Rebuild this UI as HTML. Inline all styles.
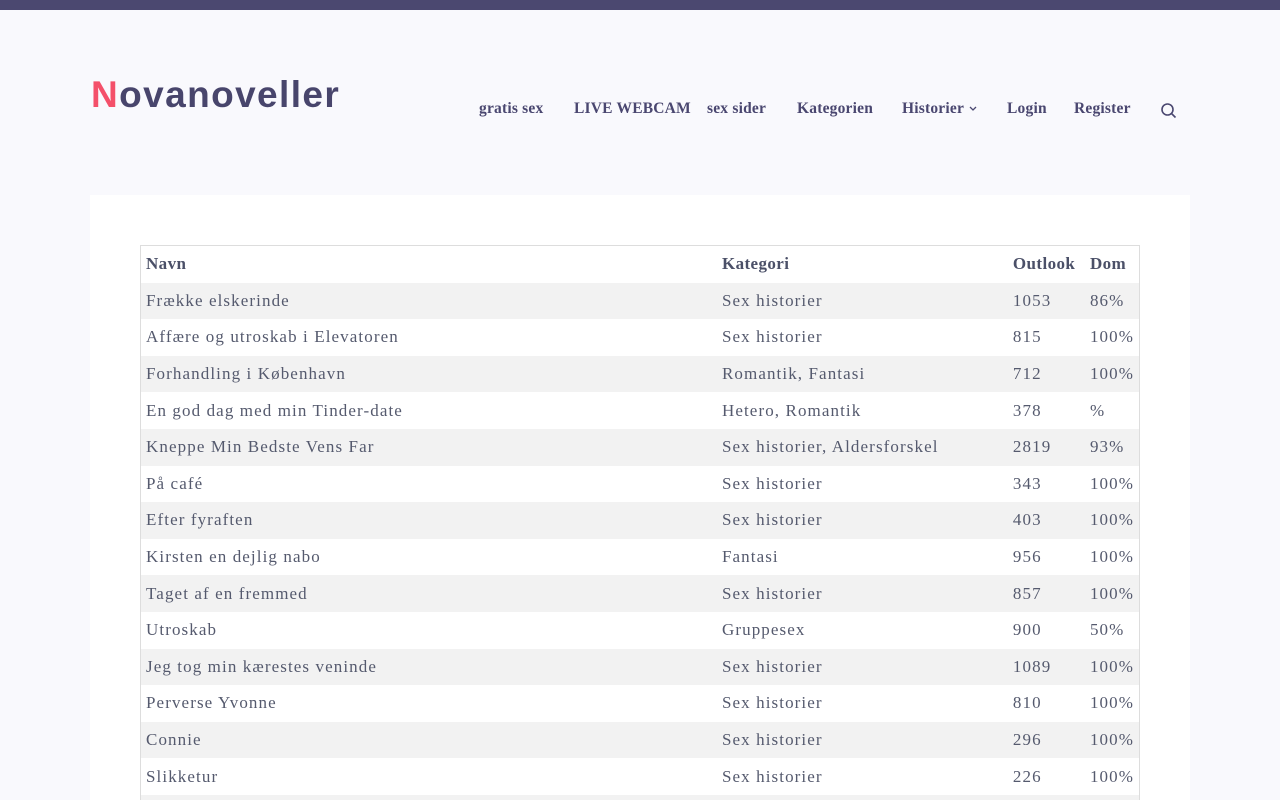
<!DOCTYPE html>
<html><head><meta charset="utf-8"><style>
html,body{margin:0;height:800px;overflow:hidden}
body{background:#f9f9fd;font-family:"Liberation Serif",serif;color:#555a6e;}
.top{height:10px;background:#4b4870;}
.logo{position:absolute;left:91px;top:74px;font:bold 37px "Liberation Sans",sans-serif;color:#48456c;letter-spacing:1.4px}
.logo span{color:#f4506a}
.nav{position:absolute;top:100px;left:479px;font-size:15.5px;font-weight:bold;color:#4a4770;white-space:nowrap;letter-spacing:.2px}
.nav span{position:absolute;top:0}
.card{position:absolute;left:90px;top:195px;width:1100px;height:605px;background:#fff;overflow:hidden}
table{position:absolute;left:50px;top:50px;width:1000px;border-collapse:collapse;border:1px solid #ddd;font-size:17px;letter-spacing:1.1px}
td,th{height:36.6px;padding:0 5px;text-align:left;vertical-align:middle}
th{font-weight:bold;color:#4b5068;letter-spacing:.4px}
tr:nth-child(even) td{background:#f2f2f2}
</style></head><body>
<div class="top"></div>
<div class="logo"><span>N</span>ovanoveller</div>
<div class="nav">
<span style="left:0">gratis sex</span>
<span style="left:95px">LIVE WEBCAM</span>
<span style="left:228px">sex sider</span>
<span style="left:318px">Kategorien</span>
<span style="left:423px">Historier <svg width="10" height="8" viewBox="0 0 10 8"><path d="M2 2l3 3 3-3" fill="none" stroke="#4a4770" stroke-width="1.3"/></svg></span>
<span style="left:528px">Login</span>
<span style="left:595px">Register</span>
<span style="left:681px;top:2px"><svg width="17" height="17" viewBox="0 0 17 17"><circle cx="7.5" cy="7.5" r="5.5" fill="none" stroke="#4a4770" stroke-width="1.6"/><path d="M11.5 11.5l4 4" stroke="#4a4770" stroke-width="1.6"/></svg></span>
</div>
<div class="card">
<table>
<tr><th style="width:566px">Navn</th><th style="width:281px">Kategori</th><th style="width:67px">Outlook</th><th>Dom</th></tr>
<tr><td>Frække elskerinde</td><td>Sex historier</td><td>1053</td><td>86%</td></tr>
<tr><td>Affære og utroskab i Elevatoren</td><td>Sex historier</td><td>815</td><td>100%</td></tr>
<tr><td>Forhandling i København</td><td>Romantik, Fantasi</td><td>712</td><td>100%</td></tr>
<tr><td>En god dag med min Tinder-date</td><td>Hetero, Romantik</td><td>378</td><td>%</td></tr>
<tr><td>Kneppe Min Bedste Vens Far</td><td>Sex historier, Aldersforskel</td><td>2819</td><td>93%</td></tr>
<tr><td>På café</td><td>Sex historier</td><td>343</td><td>100%</td></tr>
<tr><td>Efter fyraften</td><td>Sex historier</td><td>403</td><td>100%</td></tr>
<tr><td>Kirsten en dejlig nabo</td><td>Fantasi</td><td>956</td><td>100%</td></tr>
<tr><td>Taget af en fremmed</td><td>Sex historier</td><td>857</td><td>100%</td></tr>
<tr><td>Utroskab</td><td>Gruppesex</td><td>900</td><td>50%</td></tr>
<tr><td>Jeg tog min kærestes veninde</td><td>Sex historier</td><td>1089</td><td>100%</td></tr>
<tr><td>Perverse Yvonne</td><td>Sex historier</td><td>810</td><td>100%</td></tr>
<tr><td>Connie</td><td>Sex historier</td><td>296</td><td>100%</td></tr>
<tr><td>Slikketur</td><td>Sex historier</td><td>226</td><td>100%</td></tr>
<tr><td>&nbsp;</td><td></td><td></td><td></td></tr>
</table>
</div>
</body></html>
